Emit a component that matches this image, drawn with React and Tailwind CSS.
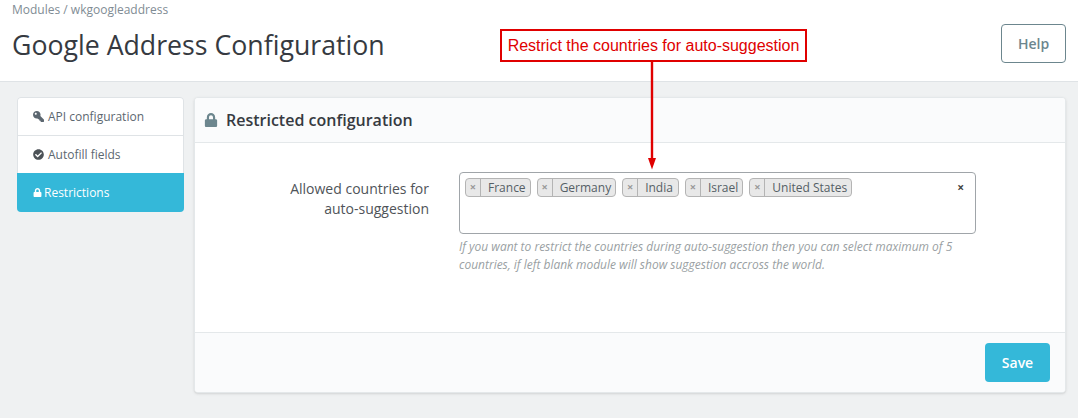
import React from 'react';
import { FaCheckCircle, FaKey, FaLock } from 'react-icons/fa';

const countries = [
    { label: 'France', cls: 'pl-[7px] pr-[4px]' },
    { label: 'Germany', cls: 'pl-[7px] pr-[4px]' },
    { label: 'India', cls: 'pl-[7px] pr-[5px]' },
    { label: 'Israel', cls: 'pl-[7px] pr-[4px]' },
    { label: 'United States', cls: 'pl-[7px] pr-[4px]' },
];

function Tag({ label, cls }) {
    return (
        <span className="flex h-[19px] items-center rounded-[4px] border border-[#b4b4b4] bg-[#e8e8e8] text-[12px] text-[#555f66]">
            <span className="flex h-full w-[15px] items-center justify-center border-r border-[#b4b4b4] text-[11px] font-bold text-[#999999]">×</span>
            <span className={cls}>{label}</span>
        </span>
    );
}

export default function App() {
    return (
        <div className="relative h-[418px] w-[1078px] overflow-hidden bg-[#eff1f2] font-['Open_Sans',sans-serif] text-[#363a41]">
            {/* Header */}
            <div className="flex h-[82px] items-start justify-between border-b border-[#dfe3e6] bg-white pl-3 pr-3">
                <div>
                    <div className="pt-[1px] text-[12px] leading-[17px] text-[#7f8c94]">Modules / wkgoogleaddress</div>
                    <h1 className="mt-[8px] text-[26.7px] leading-[37px] text-[#363a41]">Google Address Configuration</h1>
                </div>
                <button className="mt-[24px] h-[39px] w-[65px] rounded-[4px] border border-[#6c868e] text-[14px] font-semibold text-[#6c868e]">Help</button>
            </div>

            <div className="flex items-start gap-[10px] pl-[17px] pr-3 pt-[15px]">
                {/* Sidebar */}
                <div className="w-[167px] overflow-hidden rounded-[4px] bg-white text-[12px] shadow-[inset_0_0_0_1px_#dfe3e6]">
                    <div className="flex h-[39px] items-center gap-[4px] border-b border-[#dfe3e6] pl-[16px] pt-[1px] text-[#5c6770]">
                        <FaKey className="-scale-x-100 text-[11px]" />
                        <span>API configuration</span>
                    </div>
                    <div className="flex h-[37px] items-center gap-[4px] pl-[16px] text-[#5c6770]">
                        <FaCheckCircle className="text-[11px] text-[#4c5257]" />
                        <span>Autofill fields</span>
                    </div>
                    <div className="flex h-[39px] items-center gap-[2px] bg-[#34b8d9] pl-[16px] text-white">
                        <FaLock className="text-[9px]" />
                        <span>Restrictions</span>
                    </div>
                </div>

                {/* Panel */}
                <div className="w-[872px] overflow-hidden rounded-[4px] border border-[#e4e8ea] bg-white shadow-sm">
                    <div className="flex h-[45px] items-center gap-2 border-b border-[#e4e8ea] bg-[#fafbfc] pl-[9px]">
                        <FaLock className="text-[14px] text-[#6c868e]" />
                        <span className="text-[16px] font-semibold text-[#363a41]">Restricted configuration</span>
                    </div>
                    <div className="flex h-[189px] items-start pt-[29px]">
                        <label className="mt-[7px] w-[234px] text-right text-[14px] leading-[20px] text-[#4f5459]">
                            Allowed countries for<br />auto-suggestion
                        </label>
                        <div className="ml-[30px] w-[517px]">
                            <div className="flex h-[62px] items-start justify-between rounded-[4px] border border-[#a0a5a9] bg-white pl-[5px] pr-[11px] pt-[5px]">
                                <div className="flex gap-[6px]">
                                    {countries.map(c => <Tag key={c.label} label={c.label} cls={c.cls} />)}
                                </div>
                                <span className="text-[12px] font-bold leading-[19px] text-[#444444]">×</span>
                            </div>
                            <p className="mt-[4px] text-[11.97px] italic leading-[18px] text-[#9a9fa3]">
                                If you want to restrict the countries during auto-suggestion then you can select maximum of 5 countries, if left blank module will show suggestion accross the world.
                            </p>
                        </div>
                    </div>
                    <div className="flex h-[60px] items-start justify-end border-t border-[#e4e8ea] bg-[#fafbfc] pr-[15px] pt-[10px]">
                        <button className="h-[39px] w-[65px] rounded-[4px] bg-[#34b8d9] text-[14px] font-semibold text-white">Save</button>
                    </div>
                </div>
            </div>

            {/* Annotation over the page */}
            <div className="absolute left-[500px] top-[29px] flex h-[33px] w-[307px] items-center justify-center border-2 border-[#e00000] bg-white font-['Liberation_Sans',sans-serif] text-[16px] text-[#e00000]">
                Restrict the countries for auto-suggestion
            </div>
            <svg className="absolute left-[646px] top-[61px]" width="12" height="110" viewBox="0 0 12 110">
                <path d="M6 0V100" stroke="#e00000" strokeWidth="2.4" fill="none" />
                <path d="M2 97H10L6 108.5Z" fill="#e00000" />
            </svg>
        </div>
    );
}
